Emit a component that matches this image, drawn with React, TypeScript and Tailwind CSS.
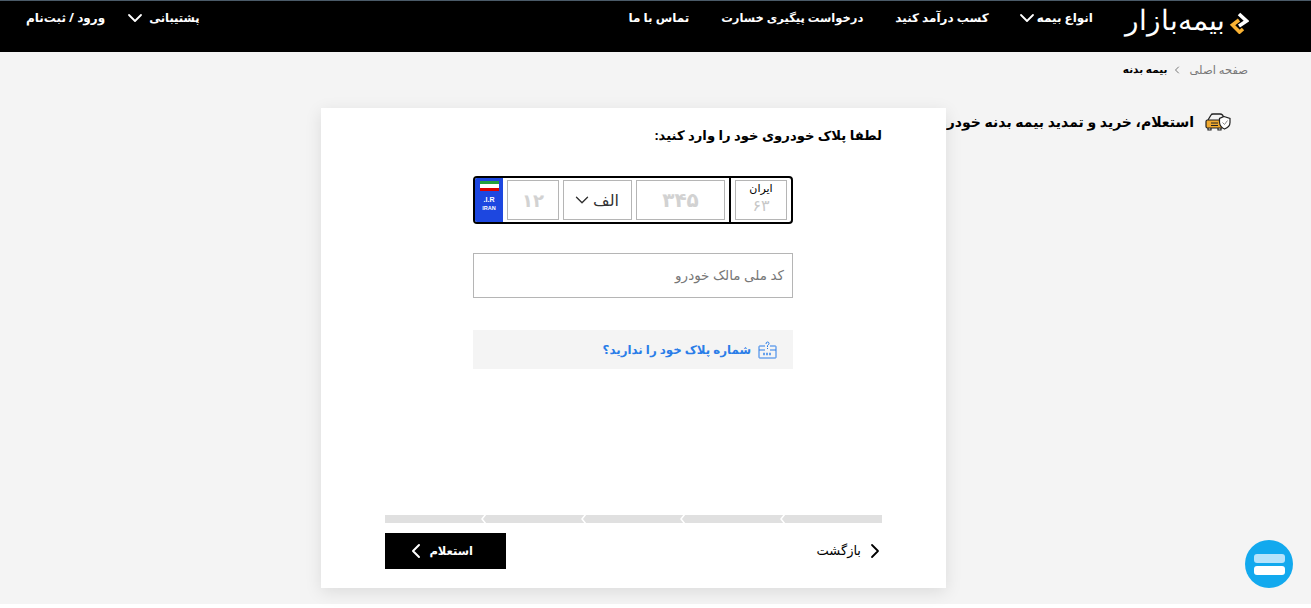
import { ChevronDown, ChevronLeft, ChevronRight } from 'lucide-react';

const fontStack = "font-['Noto_Sans','DejaVu_Sans',sans-serif]";

function NavItem({ label, chevron, className = 'text-[12px] gap-[4px]' }: { label: string; chevron?: boolean; className?: string }) {
    return (
        <a className={`flex items-center font-bold text-white whitespace-nowrap cursor-pointer ${className}`}>
            {label}
            {chevron && <ChevronDown size={24} strokeWidth={1.800} className="-mx-[6px]" />}
        </a>
    );
}

function Logo() {
    return (
        <div className="flex items-center gap-[4px]">
            <svg width="20" height="22" viewBox="0 0 20 22" fill="none" className="shrink-0 mt-[3px]">
                <path d="M10 2 L17.500 9 L10 14" stroke="#fff" strokeWidth="3.600" />
                <path d="M10 8 L3.500 13 L10.500 20 L14 17" stroke="#f9b233" strokeWidth="3.600" />
            </svg>
            <span className="text-[28px] font-extralight text-white leading-none font-['DejaVu_Sans',sans-serif]">بیمه‌بازار</span>
        </div>
    );
}

function CarIcon() {
    return (
        <svg width="26" height="20" viewBox="0 0 26 20" fill="none" className="shrink-0">
            <path d="M3 8 L6 3 Q6.500 2 8 2 H15 Q16.500 2 17.500 3 L19 6" stroke="#222" strokeWidth="1.300" />
            <rect x="1" y="8" width="17" height="8" rx="1.500" fill="#f0a92e" stroke="#222" strokeWidth="1.200" />
            <path d="M3 16 V18 H6 V16 M13 16 V18 H16 V16" stroke="#222" strokeWidth="1.200" />
            <path d="M6 11 H13 M6 13.500 H13" stroke="#222" strokeWidth="1" />
            <path d="M19 4.500 L25 6.500 V10.500 Q25 15 19.500 17 Q15 15 14.500 10.500 V6.500 Z" fill="#fff" stroke="#222" strokeWidth="1.200" />
            <path d="M17.500 10.500 L19.500 12.500 L22.500 8.500" stroke="#888" strokeWidth="1" />
        </svg>
    );
}

function PlateBox({ className, children }: { className: string; children: React.ReactNode }) {
    return (
        <div className={`h-10 shrink-0 border border-[#b5b5b5] flex items-center justify-center ${className}`}>
            {children}
        </div>
    );
}

function Plate() {
    return (
        <div className="w-[320px] h-12 border-2 border-black rounded-[4px] flex items-center overflow-hidden">
            <div className="h-full w-[62px] shrink-0 border-l-2 border-black flex items-center justify-center">
                <div className="w-[52px] h-10 border border-[#b5b5b5] flex flex-col items-center">
                    <span className="text-[11px] text-black leading-[14px]">ایران</span>
                    <span className="text-[16px] text-[#c8c8c8] leading-[18px] mt-[1px]">۶۳</span>
                </div>
            </div>
            <PlateBox className="w-[89px] mr-[4px] text-[#d2d2d2] text-[20px] font-bold">۳۴۵</PlateBox>
            <PlateBox className="w-[69px] mr-[4px] justify-between pr-[4px] text-[#333] text-[16px]">
                <span>الف</span>
                <ChevronDown size={22} strokeWidth={1.500} className="-ml-[1px]" />
            </PlateBox>
            <PlateBox className="w-[52px] mr-[4px] text-[#d2d2d2] text-[18px] font-bold">۱۲</PlateBox>
            <div className="mr-[4px] h-full flex-1 bg-[#1d47e0] flex flex-col items-center pt-[3px]">
                <div className="w-[19px] flex flex-col">
                    <div className="h-[3px] bg-[#239f40]" />
                    <div className="h-[4px] bg-white" />
                    <div className="h-[3px] bg-[#da0000]" />
                </div>
                <span className="mt-[5px] text-[7px] font-bold text-white leading-[8px] font-['Liberation_Sans',sans-serif]">I.R.</span>
                <span className="mt-[1px] text-[5.500px] font-bold text-white leading-[7px] font-['Liberation_Sans',sans-serif]">IRAN</span>
            </div>
        </div>
    );
}

function PlateHelpIcon() {
    return (
        <svg width="19" height="18" viewBox="0 0 19 18" fill="none" stroke="#2a7de8" strokeWidth="1" className="shrink-0">
            <path d="M7 5 H1.500 Q1 5 1 5.500 V16.500 Q1 17 1.500 17 H17.500 Q18 17 18 16.500 V5.500 Q18 5 17.500 5 H12" />
            <path d="M1 9 H7 M12 9 H18" />
            <path d="M8 3 Q8 1 9.500 1 Q11 1 11 2.500 Q11 3.500 9.500 4.500 V6 M9.500 7 V8" />
            <path d="M5 13 H14" strokeWidth="2.500" strokeDasharray="2 1" opacity="0.700" />
        </svg>
    );
}

function ProgressBar() {
    return (
        <div className="flex h-2 overflow-hidden">
            {[0, 1, 2, 3, 4].map((i) => (
                <div key={i} className="flex flex-1">
                    <div className="flex-1 bg-[#e0e0e0]" />
                    {i < 4 && (
                        <svg width="8" height="8" viewBox="0 0 8 8" className="relative z-10 -ml-[4px] shrink-0 bg-[#e0e0e0]" fill="none">
                            <path d="M6 -1 L2 4 L6 9" stroke="#fff" strokeWidth="1.500" />
                        </svg>
                    )}
                </div>
            ))}
        </div>
    );
}

export default function App() {
    return (
        <div dir="rtl" className={`${fontStack} h-[608px] overflow-hidden bg-white`}>
            <header className="h-[52px] bg-black border-t border-[#4a5a68] flex justify-between pr-[62px] pl-[26px] pt-[9px]">
                <div className="flex items-start gap-[32px]">
                    <div className="-mt-[3px]"><Logo /></div>
                    <nav className="flex items-center h-4 gap-[32px]">
                        <NavItem label="انواع بیمه" chevron />
                        <NavItem label="کسب درآمد کنید" />
                        <NavItem label="درخواست پیگیری خسارت" className="text-[11.500px]" />
                        <NavItem label="تماس با ما" />
                    </nav>
                </div>
                <div className="flex items-center h-4 gap-[24px]">
                    <NavItem label="پشتیبانی" chevron className="text-[11.500px] gap-[8px]" />
                    <NavItem label="ورود / ثبت‌نام" />
                </div>
            </header>

            <main className="h-[552px] bg-[#f4f4f4]">
                <div className="flex items-center gap-[6px] h-[36px] pr-[63px]">
                    <span className="text-[#777] text-[11.500px]">صفحه اصلی</span>
                    <ChevronLeft size={12} className="text-[#777] -ml-[2px]" />
                    <span className="font-bold text-black text-[10.500px]">بیمه بدنه</span>
                </div>
                <div className="flex pt-[20px]">
                    <div className="w-[365px] shrink-0 pr-[80px] pt-[3px]">
                        <div className="flex items-center gap-[11px] whitespace-nowrap">
                            <CarIcon />
                            <h1 className="text-[14px] font-bold text-black">استعلام، خرید و تمدید بیمه بدنه خودرو</h1>
                        </div>
                    </div>
                    <section className="relative z-10 w-[625px] h-[480px] bg-white px-[64px] pt-[17px] shadow-[0_4px_16px_rgba(0,0,0,0.1)]">
                        <h2 className="text-[13.200px] font-bold text-black leading-5">لطفا پلاک خودروی خود را وارد کنید:</h2>
                        <div className="mt-[31px] mr-[89px] flex flex-col items-start">
                            <Plate />
                            <div className="mt-[29px] w-[320px] h-[45px] border border-[#b5b5b5] flex items-center px-[8px] text-[13.500px] text-[#777]">
                                کد ملی مالک خودرو
                            </div>
                            <a className="mt-[32px] w-[320px] h-[39px] bg-[#f4f4f4] flex items-center pr-[16px] gap-[7px] text-[11.800px] font-bold text-[#2a7de8]">
                                <PlateHelpIcon />
                                شماره پلاک خود را ندارید؟
                            </a>
                        </div>
                        <div className="mt-[146px]"><ProgressBar /></div>
                        <div className="mt-[10px] flex items-center justify-between">
                            <a className="flex items-center gap-[2px] text-[13px] text-black">
                                <ChevronRight size={24} strokeWidth={1.800} className="-mr-[5px]" />
                                بازگشت
                            </a>
                            <button className="w-[121px] h-9 bg-black text-white text-[11.500px] font-bold flex items-center pr-[33px] gap-[1px]">
                                استعلام
                                <ChevronLeft size={24} strokeWidth={2} />
                            </button>
                        </div>
                    </section>
                </div>
            </main>

            <button className="fixed left-[1245px] top-[540px] z-20 w-12 h-12 rounded-full bg-[#12a9ee] flex flex-col items-center justify-center gap-[3px]">
                <span className="w-[31px] h-[9px] rounded-[3px] bg-[#b5e3fb]" />
                <span className="w-[31px] h-[9px] rounded-[3px] bg-white" />
            </button>
        </div>
    );
}
